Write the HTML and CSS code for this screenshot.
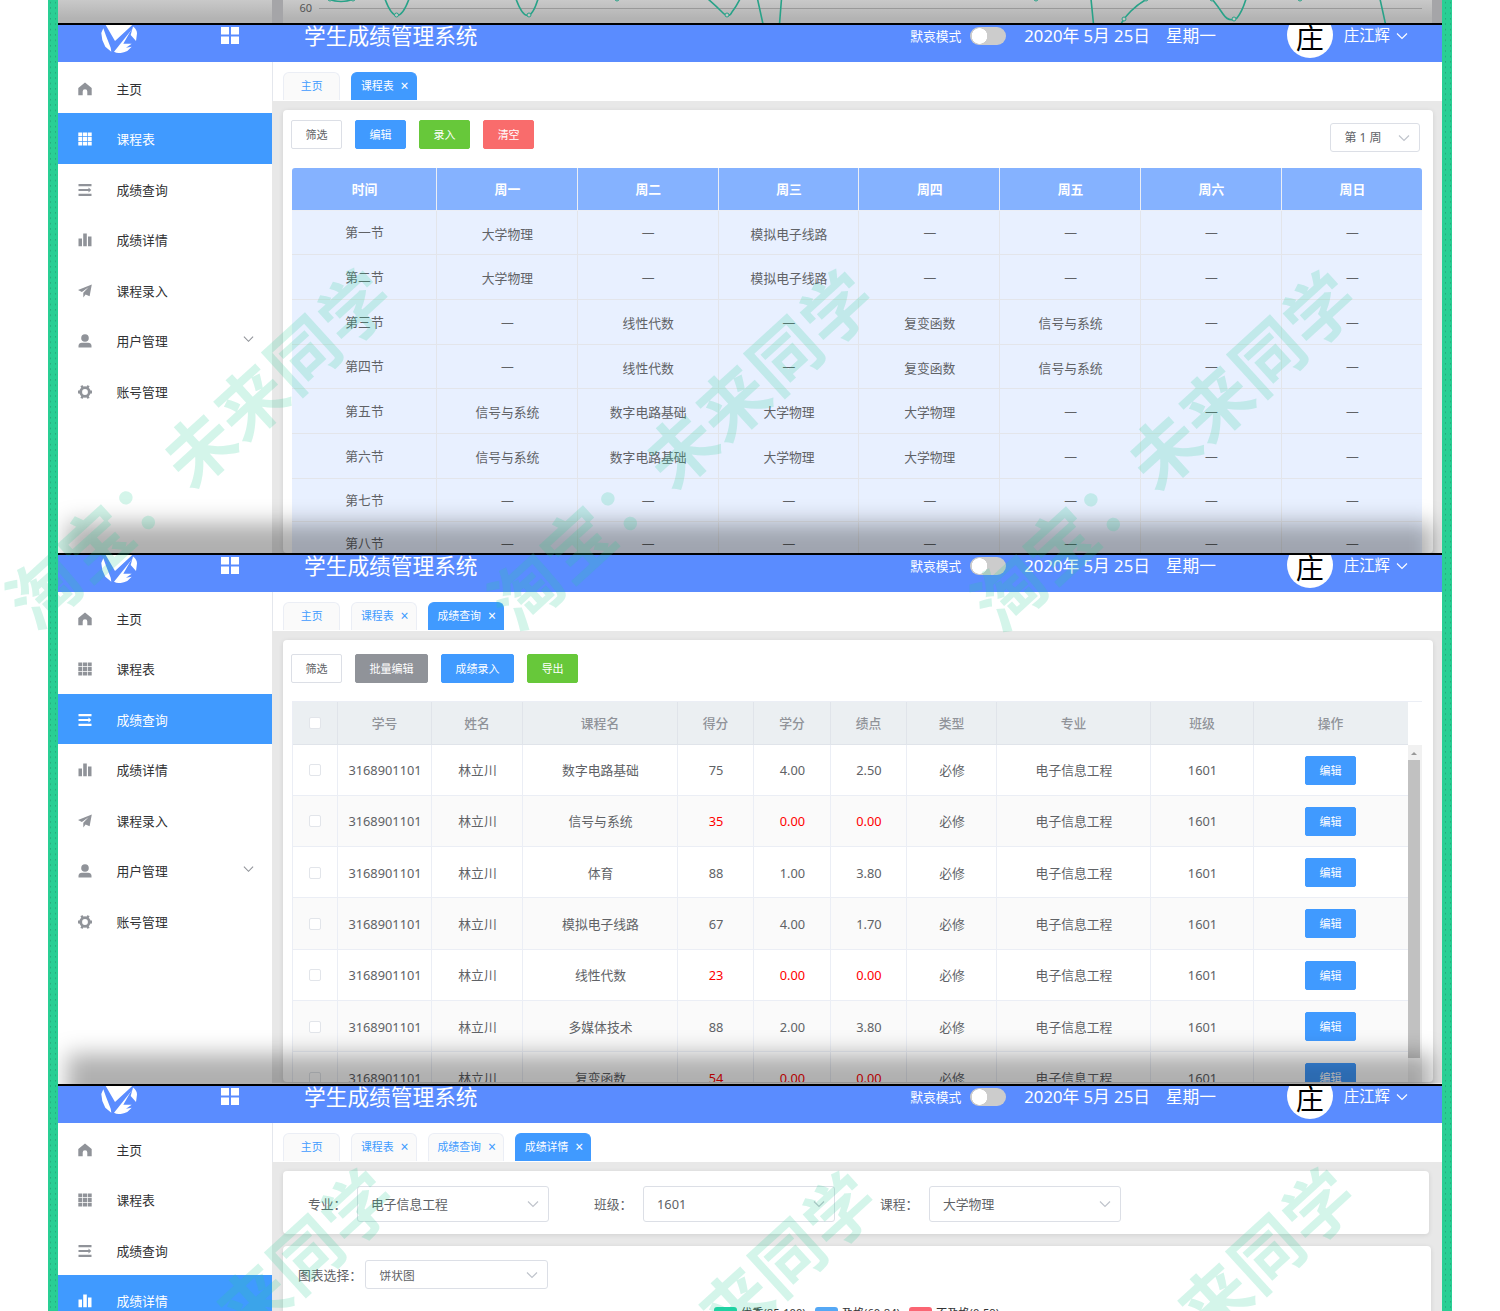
FILE: index.html
```
<!DOCTYPE html>
<html lang="zh-CN">
<head>
<meta charset="utf-8">
<title>学生成绩管理系统</title>
<link rel="stylesheet" href="styles.css">
</head>
<body>

<svg class="defs" width="0" height="0">
<symbol id="logo" viewBox="0 0 36 28"><path d="M4.7 0H31.3L14 16ZM2.3 3.3L.3 8l1 7 3 6.7 6 5-.6-4L5 10.7ZM32 3L13 26.7q6 3 13.3-.7l4.4-4.3-5.7 1 5.7-4-8.4 0 6-10.4ZM32 1.5q4 3 4 7L35 16l-5.3-6Z"/></symbol>
<symbol id="grid4" viewBox="0 0 18 17"><path d="M0 0h8v7.5H0zM10 0h8v7.5h-8zM0 9.5h8V17H0zM10 9.5h8V17h-8z"/></symbol>
<symbol id="home" viewBox="0 0 14 14"><path d="M7 .4L.3 6v7.300h4.400V9.500a2.300 2.300 0 0 1 4.600 0v3.800h4.400V6z"/></symbol>
<symbol id="grid9" viewBox="0 0 14 14"><path d="M.3.5h4v3.800h-4zM5 .5h4v3.800H5zM9.700.5h4v3.800h-4zM.3 5.100h4v3.800h-4zM5 5.100h4v3.800H5zM9.700 5.100h4v3.800h-4zM.3 9.700h4v3.800h-4zM5 9.700h4v3.800H5zM9.700 9.700h4v3.800h-4z"/></symbol>
<symbol id="list" viewBox="0 0 14 14"><path d="M.5 1h13v2.200H.5zM.5 5.900h8.700v2.200H.5zM9 5.900h1.500V4.500L13.300 7l-2.800 2.500V8.100H9zM.5 10.800h13V13H.5z"/></symbol>
<symbol id="bars" viewBox="0 0 14 14"><path d="M.5 5.400h3.500v7.800H.5zM5.200.5h3.600v12.700H5.200zM10 3.500h3.500v9.700H10z"/></symbol>
<symbol id="plane" viewBox="0 0 14 14"><path d="M13.800.5L0 6l3.900 2L10.500 3.300 5.300 8.700V13.600l2.300-3 4 1.700z"/></symbol>
<symbol id="user" viewBox="0 0 14 14"><circle cx="7" cy="4" r="3.800"/><path d="M.5 13.500v-1.700q.3-3 3.400-3h6.200q3.100 0 3.400 3v1.700z"/></symbol>
<symbol id="gear" viewBox="0 0 14 14"><circle cx="7" cy="7" r="4.300" fill="none" stroke="currentColor" stroke-width="2.800"/><path d="M2.400 1l2.400-.8 1 2.400-2 1.300zM11.600 1L9.200.2l-1 2.400 2 1.300zM2.400 13l2.400.8 1-2.400-2-1.300zM11.600 13l-2.400.8-1-2.400 2-1.300zM0 5.600h2.400v2.800H0zM11.600 5.600H14v2.800h-2.400z"/></symbol>
<symbol id="down" viewBox="0 0 12 8"><path d="M1 1.500l5 5 5-5" fill="none" stroke="currentColor" stroke-width="1.200"/></symbol>
</svg>

<div class="frame">

<div class="strip">
<div class="strip-side"></div>
<div class="strip-card">
<svg width="1149" height="23" viewBox="283 0 1149 23">
<path class="axis" d="M319 8.500H1422"/>
<text class="label" x="299.500" y="12">60</text>
<path class="curve" d="M328-1Q341 4 354-1M385-1Q397 32 409-1M516-1Q528 32 538-1M708-1Q715 5 722 12T732 12Q736 7 740-1M757.500-1L763 24M779.500 24L781.500-1M1091-1L1093.500 24M1121 24Q1124 18 1131 11T1147-1M1212-1Q1217 5 1223 14T1237 18Q1242 12 1246-1M1380-1L1385.500 24"/>
<g class="dots"><circle cx="330" cy="-1" r="2"/><circle cx="353" cy="-1" r="2"/><circle cx="396.500" cy="15" r="2"/><circle cx="529" cy="15" r="2"/><circle cx="617" cy="-1" r="2"/><circle cx="727" cy="15" r="2"/><circle cx="1036" cy="-1" r="2"/><circle cx="1124" cy="19" r="2"/><circle cx="1146" cy="-1" r="2"/><circle cx="1212" cy="-1" r="2"/><circle cx="1234" cy="19" r="2"/><circle cx="1300" cy="-1" r="2"/></g>
</svg>
</div>
</div>

<!-- 课程表 -->
<div class="screen">
<div class="header">
<div class="brand"><svg class="logo"><use href="#logo"/></svg><svg class="fold"><use href="#grid4"/></svg></div>
<div class="title">学生成绩管理系统</div>
<div class="mode">默哀模式</div><div class="switch"></div>
<div class="date">2020年 5月 25日<span>星期一</span></div>
<div class="avatar">庄</div><div class="name">庄江辉</div><svg class="arrow"><use href="#down"/></svg>
</div>
<div class="body">
<ul class="menu">
<li><svg><use href="#home"/></svg>主页</li>
<li class="on"><svg><use href="#grid9"/></svg>课程表</li>
<li><svg><use href="#list"/></svg>成绩查询</li>
<li><svg><use href="#bars"/></svg>成绩详情</li>
<li><svg><use href="#plane"/></svg>课程录入</li>
<li><svg><use href="#user"/></svg>用户管理<svg class="sub"><use href="#down"/></svg></li>
<li><svg><use href="#gear"/></svg>账号管理</li>
</ul>
<div class="main">
<div class="tabs"><span class="tab first">主页</span><span class="tab on">课程表<i>×</i></span></div>
<div class="card">
<div class="tools">
<span class="btn plain">筛选</span><span class="btn">编辑</span><span class="btn green">录入</span><span class="btn red">清空</span>
<div class="select week">第 1 周<svg><use href="#down"/></svg></div>
</div>
<table class="course">
<tr><th>时间</th><th>周一</th><th>周二</th><th>周三</th><th>周四</th><th>周五</th><th>周六</th><th>周日</th></tr>
<tr><td>第一节</td><td class="c">大学物理</td><td>—</td><td class="c">模拟电子线路</td><td>—</td><td>—</td><td>—</td><td>—</td></tr>
<tr><td>第二节</td><td class="c">大学物理</td><td>—</td><td class="c">模拟电子线路</td><td>—</td><td>—</td><td>—</td><td>—</td></tr>
<tr><td>第三节</td><td>—</td><td class="c">线性代数</td><td>—</td><td class="c">复变函数</td><td class="c">信号与系统</td><td>—</td><td>—</td></tr>
<tr><td>第四节</td><td>—</td><td class="c">线性代数</td><td>—</td><td class="c">复变函数</td><td class="c">信号与系统</td><td>—</td><td>—</td></tr>
<tr><td>第五节</td><td class="c">信号与系统</td><td class="c">数字电路基础</td><td class="c">大学物理</td><td class="c">大学物理</td><td>—</td><td>—</td><td>—</td></tr>
<tr><td>第六节</td><td class="c">信号与系统</td><td class="c">数字电路基础</td><td class="c">大学物理</td><td class="c">大学物理</td><td>—</td><td>—</td><td>—</td></tr>
<tr class="low"><td>第七节</td><td>—</td><td>—</td><td>—</td><td>—</td><td>—</td><td>—</td><td>—</td></tr>
<tr class="low"><td>第八节</td><td>—</td><td>—</td><td>—</td><td>—</td><td>—</td><td>—</td><td>—</td></tr>
</table>
</div>
</div>
</div>
</div>

<!-- 成绩查询 -->
<div class="screen second">
<div class="header">
<div class="brand"><svg class="logo"><use href="#logo"/></svg><svg class="fold"><use href="#grid4"/></svg></div>
<div class="title">学生成绩管理系统</div>
<div class="mode">默哀模式</div><div class="switch"></div>
<div class="date">2020年 5月 25日<span>星期一</span></div>
<div class="avatar">庄</div><div class="name">庄江辉</div><svg class="arrow"><use href="#down"/></svg>
</div>
<div class="body">
<ul class="menu">
<li><svg><use href="#home"/></svg>主页</li>
<li><svg><use href="#grid9"/></svg>课程表</li>
<li class="on"><svg><use href="#list"/></svg>成绩查询</li>
<li><svg><use href="#bars"/></svg>成绩详情</li>
<li><svg><use href="#plane"/></svg>课程录入</li>
<li><svg><use href="#user"/></svg>用户管理<svg class="sub"><use href="#down"/></svg></li>
<li><svg><use href="#gear"/></svg>账号管理</li>
</ul>
<div class="main">
<div class="tabs"><span class="tab first">主页</span><span class="tab">课程表<i>×</i></span><span class="tab on">成绩查询<i>×</i></span></div>
<div class="card">
<div class="tools">
<span class="btn plain">筛选</span><span class="btn gray">批量编辑</span><span class="btn">成绩录入</span><span class="btn green">导出</span>
</div>
<div class="score-box">
<table class="score">
<tr><th><b></b></th><th>学号</th><th>姓名</th><th>课程名</th><th>得分</th><th>学分</th><th>绩点</th><th>类型</th><th>专业</th><th>班级</th><th>操作</th></tr>
<tr><td><b></b></td><td>3168901101</td><td>林立川</td><td>数字电路基础</td><td>75</td><td>4.00</td><td>2.50</td><td>必修</td><td>电子信息工程</td><td>1601</td><td><span class="btn">编辑</span></td></tr>
<tr class="fail"><td><b></b></td><td>3168901101</td><td>林立川</td><td>信号与系统</td><td>35</td><td>0.00</td><td>0.00</td><td>必修</td><td>电子信息工程</td><td>1601</td><td><span class="btn">编辑</span></td></tr>
<tr><td><b></b></td><td>3168901101</td><td>林立川</td><td>体育</td><td>88</td><td>1.00</td><td>3.80</td><td>必修</td><td>电子信息工程</td><td>1601</td><td><span class="btn">编辑</span></td></tr>
<tr><td><b></b></td><td>3168901101</td><td>林立川</td><td>模拟电子线路</td><td>67</td><td>4.00</td><td>1.70</td><td>必修</td><td>电子信息工程</td><td>1601</td><td><span class="btn">编辑</span></td></tr>
<tr class="fail"><td><b></b></td><td>3168901101</td><td>林立川</td><td>线性代数</td><td>23</td><td>0.00</td><td>0.00</td><td>必修</td><td>电子信息工程</td><td>1601</td><td><span class="btn">编辑</span></td></tr>
<tr><td><b></b></td><td>3168901101</td><td>林立川</td><td>多媒体技术</td><td>88</td><td>2.00</td><td>3.80</td><td>必修</td><td>电子信息工程</td><td>1601</td><td><span class="btn">编辑</span></td></tr>
<tr class="fail"><td><b></b></td><td>3168901101</td><td>林立川</td><td>复变函数</td><td>54</td><td>0.00</td><td>0.00</td><td>必修</td><td>电子信息工程</td><td>1601</td><td><span class="btn">编辑</span></td></tr>
</table>
<div class="scroll"><div class="up"></div><div class="thumb"></div></div>
</div>
</div>
</div>
</div>
</div>

<!-- 成绩详情 -->
<div class="screen third">
<div class="header">
<div class="brand"><svg class="logo"><use href="#logo"/></svg><svg class="fold"><use href="#grid4"/></svg></div>
<div class="title">学生成绩管理系统</div>
<div class="mode">默哀模式</div><div class="switch"></div>
<div class="date">2020年 5月 25日<span>星期一</span></div>
<div class="avatar">庄</div><div class="name">庄江辉</div><svg class="arrow"><use href="#down"/></svg>
</div>
<div class="body">
<ul class="menu">
<li><svg><use href="#home"/></svg>主页</li>
<li><svg><use href="#grid9"/></svg>课程表</li>
<li><svg><use href="#list"/></svg>成绩查询</li>
<li class="on"><svg><use href="#bars"/></svg>成绩详情</li>
</ul>
<div class="main">
<div class="tabs"><span class="tab first">主页</span><span class="tab">课程表<i>×</i></span><span class="tab">成绩查询<i>×</i></span><span class="tab on">成绩详情<i>×</i></span></div>
<div class="card filter">
<label>专业：</label><div class="select">电子信息工程<svg><use href="#down"/></svg></div>
<label>班级：</label><div class="select">1601<svg><use href="#down"/></svg></div>
<label>课程：</label><div class="select">大学物理<svg><use href="#down"/></svg></div>
</div>
<div class="card chart">
<div class="pick"><label>图表选择：</label><div class="select">饼状图<svg><use href="#down"/></svg></div></div>
<div class="legend"><span class="good">优秀(85-100)</span><span class="pass">及格(60-84)</span><span class="bad">不及格(0-59)</span></div>
</div>
</div>
</div>
</div>

</div>

<div class="mark m1">淘宝：未来同学</div>
<div class="mark m2">淘宝：未来同学</div>
<div class="mark m3">淘宝：未来同学</div>
<div class="mark m4">淘宝：未来同学</div>
<div class="mark m5">淘宝：未来同学</div>
<div class="mark m6">淘宝：未来同学</div>

</body>
</html>
```
FILE: styles.css
```
* {box-sizing: border-box;}
html, body {margin: 0; height: 1311px; overflow: hidden; background: #fff;}
body {position: relative; font: 12.8px/20px "Noto Sans", "Noto Sans CJK SC", sans-serif; color: #606266;}
svg {display: block; fill: currentColor;}
.defs {position: absolute;}

.frame {margin: 0 48px; padding: 0 10px; height: 1311px; background: radial-gradient(circle at 2.5px 2.5px, #27a87c .5px, transparent 1px) 0 0/5px 5.4px, #29cf94;}

/* bottom edge of the chart above */
.strip {height: 23px; padding-right: 10px; display: flex; background: #a5a5a8;}
.strip-side {width: 214px; margin-right: 11px; background: linear-gradient(#c9c9c9, #b3b3b3 80%);}
.strip-card {flex: 1; background: linear-gradient(#c9c9c9, #b3b3b3 80%);}
.axis {stroke: #999;}
.label {font-size: 11px; fill: #555;}
.curve {fill: none; stroke: #28a288; stroke-width: 1.6;}
.dots {fill: #c4c4c4; stroke: #28a288;}

.screen {position: relative; height: 530px; border-top: 2px solid #000; overflow: hidden; background: #fff;}
.second {height: 531px;}
.third {height: 227px;}
/* dark fade along the lower edge */
.screen:after {content: ""; position: absolute; left: 9px; right: 9px; bottom: -50px; height: 80px; background: rgba(0,0,0,.31); filter: blur(11px);}
.third:after {display: none;}

.header {display: flex; align-items: center; height: 37px; padding: 0 34px 15px 0; overflow: hidden; background: #5a8cff; color: #fff;}
.brand {display: flex; align-items: center; width: 246px; padding-left: 43px;}
.logo {width: 36px; height: 28px; margin-top: 6px;}
.fold {width: 18px; height: 17px; margin: -1px 0 0 84px;}
.title {margin-right: auto; font-size: 21.7px; white-space: nowrap;}
.mode {font-size: 12.8px;}
.switch {width: 36px; height: 18px; margin: 0 18px 0 9px; border-radius: 9px; background: radial-gradient(circle at 9.5px 9px, #fff 7.5px, #ccc 8px);}
.date {width: 262.500px; font-size: 16.700px; white-space: nowrap;}
.date span {margin-left: 16px;}
.avatar {flex: none; width: 46px; height: 46px; margin: -2px 11px 0 0; border-radius: 50%; background: #fff; color: #000; font: 28px/50px "Noto Sans CJK SC", sans-serif; text-align: center;}
.name {font-size: 15.4px;}
.arrow {width: 12px; height: 8px; margin-left: 6px;}

.body {display: flex; height: 491px;}
.third .body {height: 188px;}
.menu {width: 214px; margin: 0; padding: .5px 0 0; list-style: none; color: #303133;}
.menu li {display: flex; align-items: center; height: 50.500px; padding: 1.500px 18px 0 20px;}
.menu svg {width: 14px; height: 14px; margin-right: 24.500px; color: #909399;}
.menu .sub {width: 11px; height: 8px; margin: -5px 0 0 auto;}
.menu .on, .menu .on svg {color: #fff;}
.menu .on {background: #409aff;}

.main {flex: 1; min-width: 0; background: #e8e8e8;}
.tabs {display: flex; align-items: flex-end; gap: 11.300px; height: 39px; padding: 0 11px 1px 10.300px; background: #fff; border-left: 1px solid #e4e7ed;}
.tab {height: 28px; padding: 0 7px 0 8.500px; border: 1px solid #ebeef5; border-bottom: 0; border-radius: 6px 6px 0 0; background: #fafafa; color: #409aff; font-size: 10.9px; line-height: 26px; white-space: nowrap;}
.tab i {margin-left: 7px; font-style: normal; font-size: 14px; line-height: 20px; vertical-align: -.5px;}
.tab.first {padding: 0 16.500px;}
.tab.on {background: #409aff; border-color: #409aff; color: #fff;}

.card {margin: 9px 9px 0 11px; padding: 10px 10px 0 8px; height: 443px; border-radius: 4px; background: #fff; box-shadow: 0 1px 5px rgba(0,0,0,.1);}
.tools {display: flex; align-items: flex-start; gap: 13.300px; height: 48px;}
.btn {display: inline-block; height: 29px; padding: 0 13.400px; border: 1px solid #409aff; border-radius: 2px; background: #409aff; color: #fff; font-size: 11px; line-height: 27px; white-space: nowrap;}
.plain {background: #fff; border-color: #dcdfe6; color: #606266;}
.green {background: #67c83a; border-color: #67c83a;}
.red {background: #f96c6c; border-color: #f96c6c;}
.gray {background: #909399; border-color: #909399;}
.select {display: flex; align-items: center; justify-content: space-between; height: 36px; width: 192px; padding: 0 9px 0 13.500px; border: 1px solid #dcdfe6; border-radius: 3px; white-space: nowrap; background: #fff;}
.select svg {width: 12px; height: 8px; color: #c0c4cc;}
.week {width: 90px; height: 29px; margin: 3px 3px 0 auto; font-size: 12px;}

table, tbody {display: block;}
tr {display: grid;}
th, td {display: flex; align-items: center; justify-content: center; padding: 0; border-right: 1px solid #ebeef5; border-bottom: 1px solid #ebeef5; white-space: nowrap;}
.course {width: 1130px; margin: 0 0 0 1px; border-radius: 3px 3px 0 0; overflow: hidden;}
.course tr {grid-template-columns: 145px repeat(6, 140.800px) 1fr; height: 44.700px; background: #e8f0ff;}
.course tr:first-child {height: 42.500px; background: #85b2ff; color: #fff;}
.course tr.low {height: 43px;}
.course td {border-color: #e3e5ea; padding-left: 1px;}
.course th {padding-left: 1px;}
.course .c {padding-top: 2.500px;}
.course th:last-child, .course td:last-child {border-right: 0;}

.second .card {padding-top: 14px; height: 442px; overflow: hidden;}
.score-box {display: flex; width: 1130px; border: 1px solid #ebeef5; border-right: 0; margin: -1px 0 0 1px;}
.score {width: 1115px;}
.score tr {grid-template-columns: 45px 94px 91px 155px 76px 77px 76px 90px 154px 103px 1fr; height: 51.300px;}
.score tr:nth-child(odd) {background: #fafafa;}
.score tr:first-child {height: 42.500px; background: #ebeff2; color: #909399;}
.score th {font-weight: 500; border-color: #e0e4ea;}
.score td {padding-top: .8px; padding-left: 1px;}
.score td:last-child, .score th:last-child {border-right: 0; padding-left: 0; padding-right: 1px;}
.score b {width: 12px; height: 12px; margin-right: 1px; border: 1px solid #e2e5ea; border-radius: 2px; background: #fff;}
.score .fail td:nth-child(n+5):nth-child(-n+7) {color: #f00;}
.scroll {width: 14px; height: 400px; margin-top: 43px; padding: 7px 0 0 0; background: #f1f1f1;}
.up {width: 0; margin: 0 auto 5px 3px; border: 3px solid transparent; border-top: 0; border-bottom-color: #999;}
.thumb {width: 12px; height: 298px; background: #c1c1c1;}

.filter {display: flex; align-items: center; height: 63px; margin-right: 13px; padding: 2px 0 0 25px;}
.filter label {width: 48.500px; white-space: nowrap;}
.filter .select {margin-right: 45.500px;}
.filter .select:last-child {margin-right: 0;}
.chart {height: 77px; margin: 12px 11px 0 11px; padding: 14px 15px;}
.pick {display: flex; align-items: center;}
.pick label {width: 67px; white-space: nowrap;}
.pick .select {width: 183px; height: 29px; font-size: 11.700px;}
.legend {display: flex; gap: 9px; margin: 13.500px 0 0 416px; font-size: 11.200px; line-height: 20px; color: #333; white-space: nowrap;}
.legend span {display: flex; align-items: center;}
.legend span:before {content: ""; width: 23px; height: 12px; margin: 1px 4px 0 0; border-radius: 3px; background: #1fd3a5;}
.legend .pass:before {background: #55a8f5;}
.legend .bad:before {background: #fb6573;}

/* watermark, centred on its fourth character */
.mark {position: absolute; font: bold 70px/70px "Noto Sans CJK SC", sans-serif; white-space: nowrap; color: rgba(41,207,148,.2); transform: translate(-50%, -50%) rotate(-42.300deg);}
.m1 {left: 197px; top: 446px;}
.m2 {left: 679px; top: 447px;}
.m3 {left: 1162px; top: 448px;}
.m4 {left: 200px; top: 1346px;}
.m5 {left: 682px; top: 1349px;}
.m6 {left: 1161px; top: 1345px;}
```
